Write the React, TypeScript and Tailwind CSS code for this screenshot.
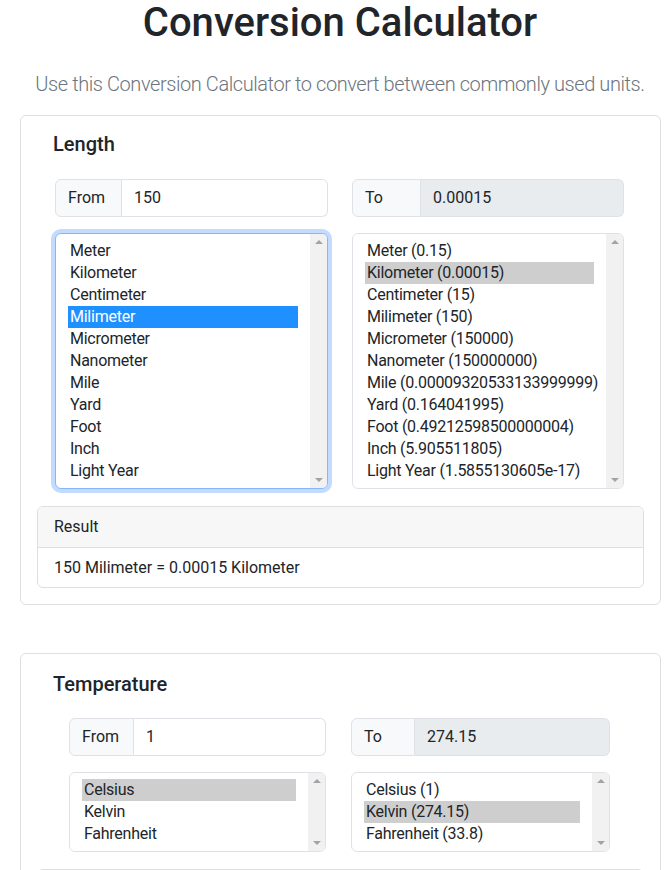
import clsx from "clsx";

const lengthUnits = [
  "Meter",
  "Kilometer",
  "Centimeter",
  "Milimeter",
  "Micrometer",
  "Nanometer",
  "Mile",
  "Yard",
  "Foot",
  "Inch",
  "Light Year",
];

const lengthResults = [
  "Meter (0.15)",
  "Kilometer (0.00015)",
  "Centimeter (15)",
  "Milimeter (150)",
  "Micrometer (150000)",
  "Nanometer (150000000)",
  "Mile (0.00009320533133999999)",
  "Yard (0.164041995)",
  "Foot (0.49212598500000004)",
  "Inch (5.905511805)",
  "Light Year (1.5855130605e-17)",
];

const tempUnits = ["Celsius", "Kelvin", "Fahrenheit"];
const tempResults = ["Celsius (1)", "Kelvin (274.15)", "Fahrenheit (33.8)"];

function InputGroup({
  label,
  value,
  disabled,
  labelWidth,
}: {
  label: string;
  value: string;
  disabled?: boolean;
  labelWidth: string;
}) {
  return (
    <div className="flex h-[38px] w-full">
      <span
        className={clsx(
          "flex shrink-0 items-center rounded-l-[6px] border border-[#dee2e6] bg-[#f8f9fa] px-3 text-[16px] leading-6",
          labelWidth
        )}
      >
        {label}
      </span>
      <input
        readOnly
        value={value}
        className={clsx(
          "min-w-0 flex-1 rounded-r-[6px] border border-l-0 border-[#dee2e6] px-3 text-[16px] leading-6 text-[#212529] outline-none",
          disabled ? "bg-[#e9ecef]" : "bg-white"
        )}
      />
    </div>
  );
}

function ListBox({
  items,
  selected,
  focused,
}: {
  items: string[];
  selected: number;
  focused?: boolean;
}) {
  return (
    <div
      className={clsx(
        "flex overflow-hidden rounded-[6px] border bg-white",
        focused
          ? "border-[#86b7fe] shadow-[0_0_0_4px_rgba(13,110,253,0.25)]"
          : "border-[#dee2e6]"
      )}
    >
      <div className="min-w-0 flex-1 overflow-hidden px-3 py-1.5">
        {items.map((item, i) => (
          <div
            key={item}
            className={clsx(
              "h-[22px] whitespace-nowrap pl-[2px] text-[16px] leading-[22px] tracking-[-0.25px]",
              i === selected
                ? focused
                  ? "bg-[#1e90ff] text-white"
                  : "bg-[#cecece] text-[#212529]"
                : "text-[#212529]"
            )}
          >
            {item}
          </div>
        ))}
      </div>
      <div className="flex w-[17px] shrink-0 flex-col items-center justify-between bg-[#f1f1f1] py-[6px]">
        <span className="h-0 w-0 border-x-[4px] border-b-[4px] border-x-transparent border-b-[#a3a3a3]" />
        <span className="h-0 w-0 border-x-[4px] border-t-[4px] border-x-transparent border-t-[#a3a3a3]" />
      </div>
    </div>
  );
}

function ResultCard({ text }: { text: string }) {
  return (
    <div className="mt-[17px] overflow-hidden rounded-[6px] border border-[#dfdfdf]">
      <div className="border-b border-[#dfdfdf] bg-[#f7f7f7] px-4 py-2 text-[16px] leading-6">
        Result
      </div>
      <div className="flex h-[39px] items-center px-4 text-[16px] leading-6">{text}</div>
    </div>
  );
}

export default function App() {
  return (
    <div className="min-h-[870px] bg-white font-['Roboto',sans-serif] text-[#212529]">
      <div className="pl-[12px] pt-[1px]">
        <h1 className="text-center text-[40px] font-medium leading-[44px]">Conversion Calculator</h1>
        <p className="mt-[24px] text-center text-[20px] font-light leading-[30px] tracking-[-0.42px] text-[#6c757d]">
          Use this Conversion Calculator to convert between commonly used units.
        </p>
      </div>

      <div className="ml-[20px] mt-[16px] w-[641px] rounded-[6px] border border-[#dfdfdf] p-4">
        <h5 className="px-4 text-[20px] font-medium leading-6">Length</h5>
        <div className="mt-[23px] grid grid-cols-[273px_272px] gap-x-[24px] gap-y-4 pl-[18px]">
          <InputGroup label="From" value="150" labelWidth="w-[67px]" />
          <InputGroup label="To" value="0.00015" disabled labelWidth="w-[69px]" />
          <ListBox items={lengthUnits} selected={3} focused />
          <ListBox items={lengthResults} selected={1} />
        </div>
        <ResultCard text="150 Milimeter = 0.00015 Kilometer" />
      </div>

      <div className="ml-[20px] mt-[48px] w-[641px] rounded-[6px] border border-[#dfdfdf] p-4">
        <h5 className="px-4 pt-[2px] text-[20px] font-medium leading-6">Temperature</h5>
        <div className="mt-[22px] grid grid-cols-[257px_259px] gap-x-[25px] gap-y-4 pl-[32px]">
          <InputGroup label="From" value="1" labelWidth="w-[65px]" />
          <InputGroup label="To" value="274.15" disabled labelWidth="w-[64px]" />
          <ListBox items={tempUnits} selected={0} />
          <ListBox items={tempResults} selected={1} />
        </div>
        <ResultCard text="1 Celsius = 274.15 Kelvin" />
      </div>
    </div>
  );
}
